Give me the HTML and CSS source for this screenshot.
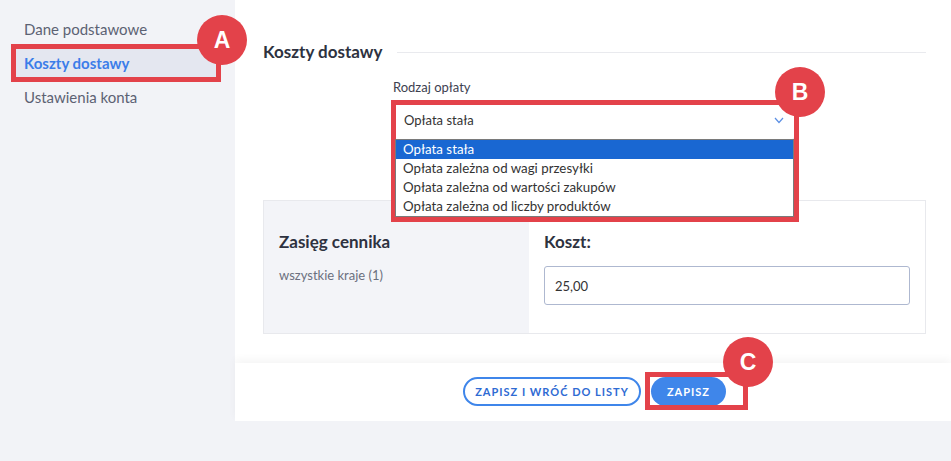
FILE: index.html
```html
<!DOCTYPE html>
<html lang="pl">
<head>
  <meta charset="UTF-8">
  <title>Koszty dostawy</title>
  <link rel="stylesheet" href="styles.css">
</head>
<body>
  <div class="layout">
    <aside class="sidebar">
      <a class="nav-item" href="#">Dane podstawowe</a>
      <a class="nav-item active" href="#">Koszty dostawy</a>
      <a class="nav-item" href="#">Ustawienia konta</a>
    </aside>

    <main class="main">
      <section class="content">
        <div class="section-title">
          <h2>Koszty dostawy</h2>
          <span class="rule"></span>
        </div>

        <div class="field">
          <label class="field-label">Rodzaj opłaty</label>
          <div class="select">
            <span>Opłata stała</span>
            <svg class="chevron" width="10" height="7" viewBox="0 0 10 7">
              <polyline points="1,1 5,5.5 9,1" fill="none" stroke="#5b8fe4" stroke-width="1.2"/>
            </svg>
            <ul class="dropdown">
              <li class="selected">Opłata stała</li>
              <li>Opłata zależna od wagi przesyłki</li>
              <li>Opłata zależna od wartości zakupów</li>
              <li>Opłata zależna od liczby produktów</li>
            </ul>
          </div>
        </div>

        <div class="price-card">
          <div class="scope">
            <h3>Zasięg cennika</h3>
            <p class="scope-text">wszystkie kraje (1)</p>
          </div>
          <div class="cost">
            <h3>Koszt:</h3>
            <input class="cost-input" type="text" value="25,00">
          </div>
        </div>
      </section>

      <footer class="actions">
        <button class="btn btn-outline">Zapisz i wróć do listy</button>
        <button class="btn btn-primary">Zapisz</button>
      </footer>
    </main>
  </div>

  <!-- annotations -->
  <div class="mark-box box-a"></div>
  <div class="mark-circle circle-a">A</div>
  <div class="mark-box box-b"></div>
  <div class="mark-circle circle-b">B</div>
  <div class="mark-box box-c"></div>
  <div class="mark-circle circle-c">C</div>
</body>
</html>
```

FILE: styles.css
```css
body {
  margin: 0;
  background: #f2f3f7;
  font-family: Lato, "Open Sans", sans-serif;
  color: #2e3240;
}

.layout {
  display: flex;
  align-items: flex-start;
}

.sidebar {
  width: 235px;
  flex-shrink: 0;
  box-sizing: border-box;
  padding: 12px 15px 0 12px;
}

.nav-item {
  display: block;
  height: 34px;
  line-height: 34px;
  padding: 0 12px;
  font-size: 15px;
  color: #5c6273;
  text-decoration: none;
}

.nav-item.active {
  background: #e4e7f0;
  color: #3b7de9;
  font-weight: bold;
}

.main {
  flex: 1;
}

.content {
  background: #fff;
  padding: 40px 25px 29px 28px;
}

.section-title {
  display: flex;
  align-items: center;
  gap: 15px;
}

.section-title h2 {
  margin: 0;
  font-size: 17px;
  line-height: 24px;
  font-weight: bold;
}

.rule {
  flex: 1;
  height: 1px;
  background: #e9eaee;
}

.field {
  margin: 14px 0 0 130px;
  width: 402px;
}

.field-label {
  display: block;
  font-size: 13px;
  line-height: 18px;
  color: #3d4150;
}

.select {
  position: relative;
  margin-top: 4px;
  height: 40px;
  box-sizing: border-box;
  border: 1px solid #dfe3eb;
  border-radius: 3px;
  padding: 0 10px;
  display: flex;
  align-items: center;
  justify-content: space-between;
  font-size: 13px;
  color: #333;
  background: #fff;
}

.dropdown {
  position: absolute;
  top: 100%;
  left: 1px;
  right: 0;
  margin: 0;
  padding: 0;
  list-style: none;
  background: #fff;
  border: 1px solid #7a7a7a;
  z-index: 2;
}

.dropdown li {
  height: 19px;
  line-height: 19px;
  padding: 0 7px;
  font-size: 13.3px;
  color: #333;
}

.dropdown li.selected {
  background: #1967d2;
  color: #fff;
}

.price-card {
  margin-top: 60px;
  display: grid;
  grid-template-columns: 265px 1fr;
  border: 1px solid #e8e9ed;
}

.scope, .cost {
  padding: 30px 15px 28px;
}

.scope {
  background: #f3f4f8;
}

.price-card h3 {
  margin: 0;
  font-size: 17px;
  line-height: 22px;
  font-weight: bold;
}

.scope-text {
  margin: 13px 0 0;
  font-size: 13px;
  line-height: 18px;
  color: #6b7080;
}

.cost-input {
  display: block;
  margin-top: 13px;
  width: 100%;
  height: 39px;
  box-sizing: border-box;
  border: 1px solid #aeb8d0;
  border-radius: 3px;
  padding: 0 10px;
  font-family: inherit;
  font-size: 13px;
  color: #333;
}

.actions {
  background: #fff;
  box-shadow: 0 -4px 8px rgba(0, 0, 0, 0.04);
  height: 58px;
  box-sizing: border-box;
  padding: 14px 0 0 3px;
  display: flex;
  justify-content: center;
  gap: 10px;
  position: relative;
}

.btn {
  height: 29px;
  border-radius: 15px;
  font-family: inherit;
  font-size: 11px;
  font-weight: bold;
  letter-spacing: 1px;
  text-transform: uppercase;
  cursor: pointer;
}

.btn-outline {
  width: 178px;
  background: #fff;
  border: 2px solid #3f86ea;
  color: #2f6bd3;
}

.btn-primary {
  width: 75px;
  background: #3f86ea;
  border: none;
  color: #fff;
}

.mark-box {
  position: absolute;
  box-sizing: border-box;
  border: 5px solid #e3424a;
}

.box-a { left: 11px; top: 44px; width: 210px; height: 38px; }
.box-b { left: 391px; top: 100px; width: 408px; height: 122px; }
.box-c { left: 645px; top: 372px; width: 103px; height: 38px; }

.mark-circle {
  position: absolute;
  width: 50px;
  height: 50px;
  border-radius: 50%;
  background: #e3424a;
  color: #fff;
  font-family: "Liberation Sans", Arial, sans-serif;
  font-weight: bold;
  font-size: 23px;
  line-height: 50px;
  text-align: center;
}

.circle-a { left: 197px; top: 15px; }
.circle-b { left: 775px; top: 67px; }
.circle-c { left: 723px; top: 337px; }
```
